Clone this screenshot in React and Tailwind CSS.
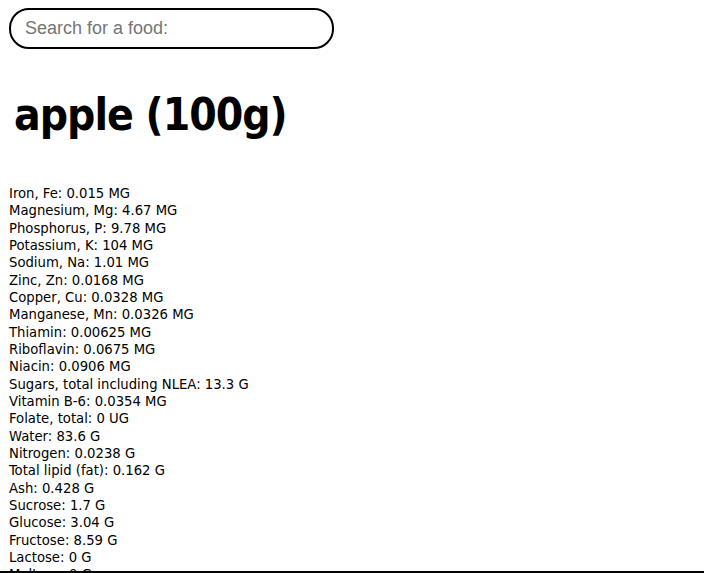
const nutrients = [
  ["Iron, Fe", "0.015 MG"],
  ["Magnesium, Mg", "4.67 MG"],
  ["Phosphorus, P", "9.78 MG"],
  ["Potassium, K", "104 MG"],
  ["Sodium, Na", "1.01 MG"],
  ["Zinc, Zn", "0.0168 MG"],
  ["Copper, Cu", "0.0328 MG"],
  ["Manganese, Mn", "0.0326 MG"],
  ["Thiamin", "0.00625 MG"],
  ["Riboflavin", "0.0675 MG"],
  ["Niacin", "0.0906 MG"],
  ["Sugars, total including NLEA", "13.3 G"],
  ["Vitamin B-6", "0.0354 MG"],
  ["Folate, total", "0 UG"],
  ["Water", "83.6 G"],
  ["Nitrogen", "0.0238 G"],
  ["Total lipid (fat)", "0.162 G"],
  ["Ash", "0.428 G"],
  ["Sucrose", "1.7 G"],
  ["Glucose", "3.04 G"],
  ["Fructose", "8.59 G"],
  ["Lactose", "0 G"],
  ["Maltose", "0 G"],
  ["Galactose", "0 G"],
];

function App() {
  return (
    <div className="h-[573px] overflow-hidden bg-white text-black font-['DejaVu_Sans_Condensed','DejaVu_Sans',sans-serif] flex flex-col">
      <div className="flex-1 min-h-0 overflow-hidden">
        {/* Search */}
        <div className="pt-2 pl-[9px]">
          <input
            type="text"
            placeholder="Search for a food:"
            className="w-[325px] h-[41px] rounded-[20px] border-2 border-black px-[14px] text-[18px] font-['Liberation_Sans',Arial,sans-serif] placeholder:text-[#757575] outline-none"
          />
        </div>

        {/* Food title */}
        <h1 className="mt-[38px] pl-[14px] text-[44px] tracking-[-1px] font-bold leading-[56px]">apple (100g)</h1>

        {/* Nutrients */}
        <ul className="mt-[41px] pl-[9px] text-[14.7px] leading-[17.33px]">
          {nutrients.map(([name, amount]) => (
            <li key={name}>
              {name}: {amount}
            </li>
          ))}
        </ul>
      </div>
      <div className="h-[2px] bg-black"></div>
    </div>
  );
}

export default App;
